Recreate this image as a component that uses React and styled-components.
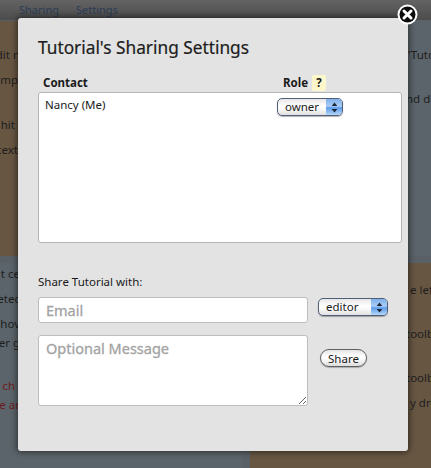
import React from "react";
import styled, { createGlobalStyle } from "styled-components";

const Global = createGlobalStyle`
  html, body { margin: 0; padding: 0; background: #5c6368; }
  #root { width: 431px; height: 468px; }
`;

const FONT = `"Noto Sans", "Open Sans", "DejaVu Sans", sans-serif`;

const Page = styled.div`
  position: relative;
  width: 431px;
  height: 468px;
  overflow: hidden;
  font-family: ${FONT};
  background: #5a6166;
  display: flex;
  flex-direction: column;
`;

const TopBar = styled.div`
  height: 20px;
  flex: none;
  background: linear-gradient(#636363, #4c4c4c);
  display: flex;
  gap: 17px;
  padding-left: 19px;
  font-size: 11px;
  line-height: 19px;
  color: #2c3d57;
`;

const Cards = styled.div`
  flex: 1;
  display: grid;
  grid-template-columns: 243px 181px;
  column-gap: 7px;
  grid-template-rows: 235px 1fr;
  row-gap: 7px;
  padding-top: 1px;
`;

const BrownCard = styled.div`
  background-color: #675642;
  padding-top: ${(p) => p.$top}px;
  padding-left: ${(p) => (p.$right ? 158 : 0)}px;
  font-size: 11.5px;
`;

const SlateCard = styled(BrownCard)`
  background-color: #5b646a;
`;

const LeftLine = styled.div`
  height: ${(p) => p.$h}px;
  width: ${(p) => p.$end}px;
  line-height: 18px;
  white-space: nowrap;
  color: ${(p) => p.$color || "#1e1e1e"};
  display: flex;
  justify-content: flex-end;
`;

const RightLine = styled.div`
  height: ${(p) => p.$h}px;
  margin-left: ${(p) => p.$shift || 0}px;
  line-height: 18px;
  white-space: nowrap;
  color: #1e1e1e;
`;

const Modal = styled.div`
  position: absolute;
  left: 18px;
  top: 18px;
  width: 390px;
  height: 433px;
  box-sizing: border-box;
  background: #e3e3e3;
  border-radius: 3px;
  box-shadow: 0 0 6px 1px rgba(0, 0, 0, 0.55);
  padding: 18px 0 0 20px;
  color: #1a1a1a;
`;

const Title = styled.h2`
  margin: 0;
  font-size: 17.3px;
  font-weight: 400;
  line-height: 24px;
  color: #1c1c1c;
  -webkit-text-stroke: 0.2px #1c1c1c;
`;

const HeadRow = styled.div`
  display: flex;
  align-items: center;
  height: 17px;
  margin-top: 14px;
  padding-left: 5px;
  font-size: 11.5px;
  font-weight: 700;
`;

const ContactHead = styled.div`
  width: 240px;
`;

const Help = styled.span`
  display: inline-block;
  width: 14px;
  height: 16px;
  margin-left: 4px;
  background: #fdf8cb;
  border-radius: 2px;
  text-align: center;
  line-height: 16px;
`;

const ContactBox = styled.div`
  width: 364px;
  height: 151px;
  margin-top: 1px;
  box-sizing: border-box;
  background: #fff;
  border: 1px solid #b5b5b5;
  border-radius: 3px;
  padding: 5px 0 0 6px;
  display: flex;
  font-size: 11.5px;
  line-height: 14px;
`;

const ContactName = styled.div`
  width: 232px;
`;

const SelectBox = styled.div`
  width: ${(p) => p.$w}px;
  height: 18px;
  margin-top: ${(p) => p.$top || 0}px;
  box-sizing: border-box;
  border: 1px solid #4f5f78;
  border-radius: 5px;
  background: linear-gradient(#e6e6e6 0%, #ffffff 45%, #fafafa 60%, #e0e0e0 100%);
  box-shadow: 0 1px 1px rgba(0, 0, 0, 0.3);
  display: flex;
  justify-content: space-between;
  overflow: hidden;
  font-size: 11.5px;
  line-height: 16px;
  color: #1a1a1a;
`;

const SelectLabel = styled.span`
  padding-left: 7px;
`;

const SelectArrows = styled.span`
  width: 16px;
  background: linear-gradient(#7fb0ea 0%, #a9cdf5 45%, #5d9bea 55%, #b5d6f8 100%);
  display: flex;
  align-items: center;
  justify-content: center;
`;

const ShareLabel = styled.div`
  margin-top: 31px;
  font-size: 11.5px;
  line-height: 16px;
`;

const FormGrid = styled.div`
  display: grid;
  grid-template-columns: 270px 1fr;
  row-gap: 12px;
  column-gap: 10px;
  margin-top: 7px;
`;

const EmailInput = styled.input`
  width: 270px;
  height: 26px;
  box-sizing: border-box;
  border: 1px solid #bdbdbd;
  border-radius: 3px;
  background: #fff;
  padding: 0 7px;
  font-family: ${FONT};
  font-size: 14.5px;
  outline: none;
  -webkit-text-stroke: 0.3px #a3a3a3;
  &::placeholder { color: #a3a3a3; opacity: 1; }
`;

const MessageInput = styled.textarea`
  display: block;
  width: 270px;
  height: 71px;
  box-sizing: border-box;
  border: 1px solid #bdbdbd;
  border-radius: 3px;
  background: #fff;
  padding: 2px 7px;
  margin: 0;
  font-family: ${FONT};
  font-size: 14.5px;
  line-height: 20px;
  outline: none;
  -webkit-text-stroke: 0.3px #a3a3a3;
  &::placeholder { color: #a3a3a3; opacity: 1; }
`;

const ShareButton = styled.button`
  width: 47px;
  height: 18px;
  margin: 14px 0 0 2px;
  padding: 0;
  border: 1px solid #5f5f5f;
  border-radius: 9px;
  background: linear-gradient(#e4e4e4 0%, #ffffff 40%, #f6f6f6 65%, #dcdcdc 100%);
  box-shadow: 0 1px 1px rgba(0, 0, 0, 0.25);
  font-family: ${FONT};
  font-size: 11.5px;
  line-height: 15px;
  color: #1a1a1a;
`;

const CloseButton = styled.div`
  position: absolute;
  left: 397px;
  top: 4px;
  width: 21px;
  height: 21px;
`;

const Arrows = () => (
  <svg width="7" height="11" viewBox="0 0 7 11">
    <path d="M3.5 0.5 L6.3 4 H0.7 Z M3.5 10.5 L6.3 7 H0.7 Z" fill="#1b2738" />
  </svg>
);

const Select = ({ label, w, top }) => (
  <SelectBox $w={w} $top={top}>
    <SelectLabel>{label}</SelectLabel>
    <SelectArrows><Arrows /></SelectArrows>
  </SelectBox>
);

export default function App() {
  return (
    <Page>
      <Global />
      <TopBar><span>Sharing</span><span>Settings</span></TopBar>
      <Cards>
        <BrownCard $top={25}>
          <LeftLine $h={25} $end={20}><span>dit n</span></LeftLine>
          <LeftLine $h={45} $end={18}><span>mp</span></LeftLine>
          <LeftLine $h={25} $end={15}><span>hit</span></LeftLine>
          <LeftLine $h={25} $end={18}><span>text</span></LeftLine>
        </BrownCard>
        <SlateCard $right $top={25}>
          <RightLine $h={44}>'Tuto</RightLine>
          <RightLine $h={25} $shift={-2}>nd dr</RightLine>
        </SlateCard>
        <SlateCard $top={2}>
          <LeftLine $h={25} $end={20}><span>t ce</span></LeftLine>
          <LeftLine $h={25} $end={20}><span>etec</span></LeftLine>
          <LeftLine $h={19} $end={20}><span>hov</span></LeftLine>
          <LeftLine $h={43} $end={20}><span>er g</span></LeftLine>
          <LeftLine $h={19} $end={15} $color="#6e1c1c"><span>ch</span></LeftLine>
          <LeftLine $h={19} $end={20} $color="#6e1c1c"><span>e ar</span></LeftLine>
        </SlateCard>
        <BrownCard $right $top={18}>
          <RightLine $h={44} $shift={2}>e lef</RightLine>
          <RightLine $h={44} $shift={-2}>toolb</RightLine>
          <RightLine $h={25} $shift={-2}>toolb</RightLine>
          <RightLine $h={25} $shift={2}>y dr</RightLine>
        </BrownCard>
      </Cards>
      <Modal>
        <Title>Tutorial's Sharing Settings</Title>
        <HeadRow>
          <ContactHead>Contact</ContactHead>
          <span>Role</span>
          <Help>?</Help>
        </HeadRow>
        <ContactBox>
          <ContactName>Nancy (Me)</ContactName>
          <Select label="owner" w={66} />
        </ContactBox>
        <ShareLabel>Share Tutorial with:</ShareLabel>
        <FormGrid>
          <EmailInput placeholder="Email" />
          <Select label="editor" w={70} top={1} />
          <MessageInput placeholder="Optional Message" />
          <ShareButton>Share</ShareButton>
        </FormGrid>
      </Modal>
      <CloseButton>
        <svg width="21" height="21" viewBox="0 0 21 21">
          <circle cx="10.5" cy="10.5" r="10" fill="#fff" />
          <circle cx="10.5" cy="10.5" r="8" fill="#0c0c0c" />
          <path d="M7 7 L14 14 M14 7 L7 14" stroke="#fff" strokeWidth="3" strokeLinecap="round" />
        </svg>
      </CloseButton>
    </Page>
  );
}
